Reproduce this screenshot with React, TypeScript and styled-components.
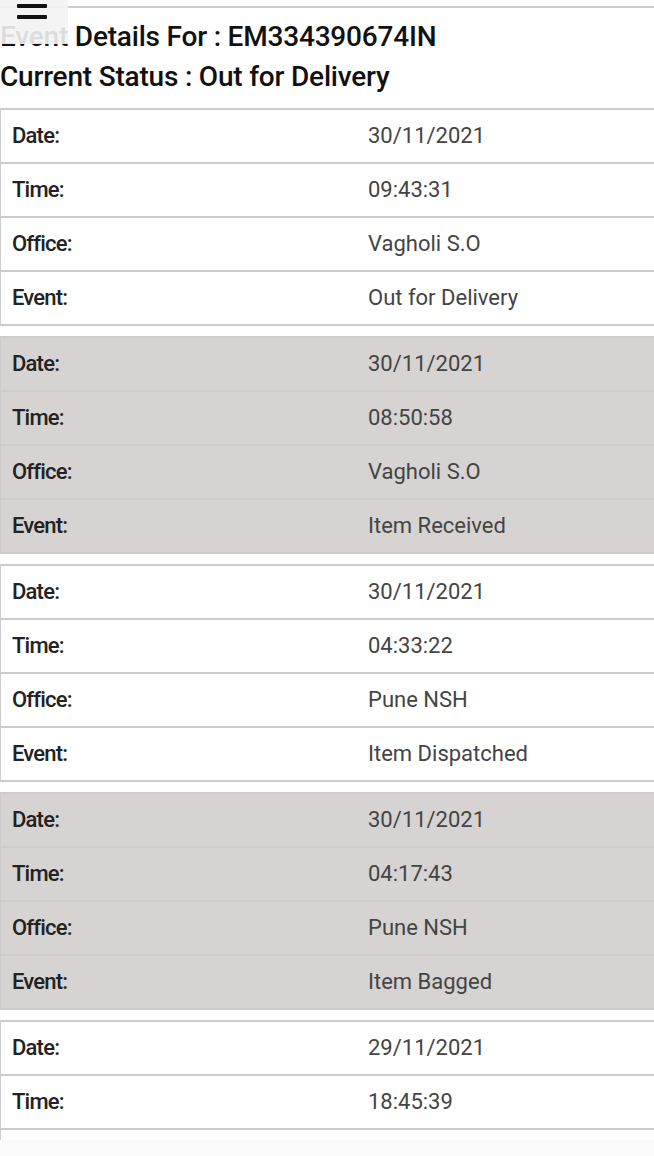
import React from "react";
import styled, { createGlobalStyle } from "styled-components";

const GlobalStyle = createGlobalStyle`
  html, body {
    margin: 0;
    padding: 0;
    background: #ffffff;
    font-family: Roboto, "Noto Sans", Arial, sans-serif;
    overflow: hidden;
  }
`;

const Page = styled.div`
  position: relative;
  width: 654px;
  height: 1156px;
  overflow: hidden;
  background: #fff;
`;

const TopRule = styled.div`
  margin-top: 6px;
  height: 2px;
  background: #cfcfcf;
`;

const MenuButton = styled.button`
  position: absolute;
  top: 0;
  left: 0;
  width: 68px;
  height: 44px;
  border: none;
  padding: 0;
  margin: 0;
  background: rgba(243, 243, 243, 0.9);
  z-index: 2;
  display: block;
`;

const Bar = styled.span<{ $top: number }>`
  position: absolute;
  left: 17px;
  width: 30px;
  height: 4px;
  top: ${(p) => p.$top}px;
  background: #111;
  border-radius: 1px;
`;

const Heading = styled.h1`
  margin: 9px 0 0 0;
  font-size: 28px;
  line-height: 40px;
  font-weight: 500;
  color: #111;
  letter-spacing: -0.2px;
`;

const Tables = styled.div`
  margin-top: 11px;
  display: flex;
  flex-direction: column;
  gap: 10px;
`;

const EventTable = styled.div<{ $shaded: boolean }>`
  display: grid;
  grid-template-columns: 356px 1fr;
  background: ${(p) => (p.$shaded ? "#d6d3d2" : "#ffffff")};
  border-left: 1px solid #cccccc;
  border-top: 2px solid #cccccc;
`;

const Cell = styled.div<{ $label?: boolean }>`
  box-sizing: border-box;
  height: 54px;
  border-bottom: 2px solid #cccccc;
  display: flex;
  align-items: center;
  padding-left: 11px;
  padding-bottom: 2px;
  font-size: 22px;
  font-weight: ${(p) => (p.$label ? 500 : 400)};
  color: ${(p) => (p.$label ? "#222" : "#444")};
  letter-spacing: ${(p) => (p.$label ? "-0.8px" : "0px")};
`;

const Footer = styled.div`
  position: fixed;
  left: 0;
  right: 0;
  bottom: 0;
  height: 16px;
  background: #fafafa;
  z-index: 3;
`;

type Ev = { date: string; time: string; office: string; event: string };

const events: Ev[] = [
  { date: "30/11/2021", time: "09:43:31", office: "Vagholi S.O", event: "Out for Delivery" },
  { date: "30/11/2021", time: "08:50:58", office: "Vagholi S.O", event: "Item Received" },
  { date: "30/11/2021", time: "04:33:22", office: "Pune NSH", event: "Item Dispatched" },
  { date: "30/11/2021", time: "04:17:43", office: "Pune NSH", event: "Item Bagged" },
  { date: "29/11/2021", time: "18:45:39", office: "Pune NSH", event: "Item Booked" },
];

export default function App() {
  return (
    <Page>
      <GlobalStyle />
      <MenuButton aria-label="menu">
        <Bar $top={-7} />
        <Bar $top={4} />
        <Bar $top={15} />
      </MenuButton>
      <TopRule />
      <Heading>
        Event Details For : EM334390674IN
        <br />
        Current Status : Out for Delivery
      </Heading>
      <Tables>
        {events.map((e, i) => (
          <EventTable key={i} $shaded={i % 2 === 1}>
            <Cell $label>Date:</Cell>
            <Cell>{e.date}</Cell>
            <Cell $label>Time:</Cell>
            <Cell>{e.time}</Cell>
            <Cell $label>Office:</Cell>
            <Cell>{e.office}</Cell>
            <Cell $label>Event:</Cell>
            <Cell>{e.event}</Cell>
          </EventTable>
        ))}
      </Tables>
      <Footer />
    </Page>
  );
}
